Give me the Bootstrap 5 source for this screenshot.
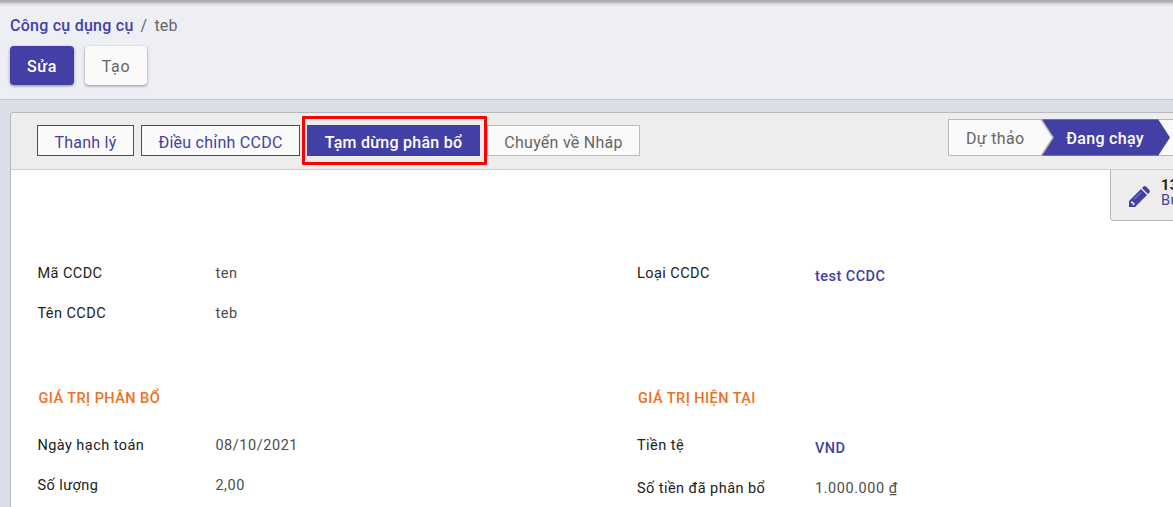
<!DOCTYPE html>
<html lang="vi">
<head>
<meta charset="utf-8">
<meta name="viewport" content="width=device-width, initial-scale=1">
<title>Công cụ dụng cụ</title>
<link href="https://cdn.jsdelivr.net/npm/bootstrap@5.3.0/dist/css/bootstrap.min.css" rel="stylesheet">
<style>
:root{--brand:#4340a5}
body{font-family:Roboto,"Noto Sans",sans-serif;font-size:16px;line-height:20px;background:#dbdde9;height:507px;overflow:hidden;color:#666}
.panel{height:100px;background:#eeeff4;border-bottom:1px solid #c4c5cf;padding:15px 10px 0}
.topline{height:7px;margin:-15px -10px 9px;background:linear-gradient(#a7a8ad,#b5b6bb 30%,#dedfe4 60%,#eeeff4)}
.crumbs{height:20px;letter-spacing:.25px;gap:7px}
.crumbs span{letter-spacing:.2px}
.crumbs a,.linkval{color:var(--brand);font-weight:500;text-decoration:none}
.act{height:39px;padding:3px 0 0;font-size:16px;border:0;border-radius:4px;box-shadow:0 1px 3px rgba(0,0,0,.42);letter-spacing:.6px;margin-top:10px}
.act-main,.act-main:hover{background:var(--brand);color:#fff;font-weight:500;width:64px}
.act-new{background:#fafafa;color:#666;width:62px;margin-left:11px}
.sheet{margin:12px 0 0 10px;height:395px;border:1px solid #b8b9bd;border-width:1px 0 0 1px;border-radius:4px 0 0 0;background:#fff;overflow:hidden}
.bar{height:57px;background:#ededed;border-bottom:1px solid #cfcfd3;padding:12px 0 0 26px}
.op{height:31px;padding:4px 0 0;border:1px solid var(--brand);border-radius:0;background:#fafafa;color:var(--brand);font-size:16px;line-height:20px;letter-spacing:.25px}
.op-a{width:97px}.op-b{width:159px;margin-left:7px}
.op-c{width:173px;margin-left:7px;background:var(--brand);color:#fff;font-weight:500;position:relative}
.op-c::after{content:"";position:absolute;left:-6px;top:-10px;width:185px;height:49px;border:3px solid #fe0000;border-radius:1px}
.op-d{width:153px;margin-left:7px;border-color:#bcbcbc;color:#666}
.steps{width:225px;height:37px;margin-top:-6px;border:1px solid #b9b9b9;border-right:0;background:#fafafa;padding:2px 0 0 17px;letter-spacing:.3px}
.steps svg{position:absolute;left:91px;top:-1px}
.steps b{position:relative;font-weight:500;color:#fff;margin-left:42px}
.stat{width:63px;height:51px;background:#ededed;border:1px solid #b8b9bd;border-width:0 0 1px 1px;border-radius:0 0 0 4px;padding:8px 0 0 17px}
.stat svg{margin:8px -1px 0 1px}
.stat-text{font-size:14.5px;line-height:15px;white-space:nowrap;letter-spacing:.4px;margin-left:12px}
.stat-text strong{color:#222}.stat-text span{color:var(--brand)}
.fields{padding:43px 0 0 26.4px;font-size:14.5px;letter-spacing:.45px;line-height:20px}
.group{width:599.6px;flex:none}
.line{height:40px}
.lbl{width:178px;color:#212121;flex:none}
.val{color:#4c4c4c;font-weight:400;letter-spacing:.55px}
.linkval{padding-top:3px}
.head{color:#f07023;font-weight:500;font-size:14.5px;letter-spacing:.45px;height:47px;padding-left:1px;margin:45px 0 0;line-height:20px}
.head-right{margin-top:85px}
.line-tall{height:43px}
</style>
</head>
<body>
<header class="panel">
  <div class="topline"></div>
  <div class="crumbs d-flex"><a href="#">Công cụ dụng cụ</a><span>/</span><span>teb</span></div>
  <div class="d-flex"><button class="btn act act-main">Sửa</button><button class="btn act act-new">Tạo</button></div>
</header>
<main class="sheet">
  <div class="bar d-flex justify-content-between">
    <div class="d-flex">
      <button class="btn op op-a">Thanh lý</button>
      <button class="btn op op-b">Điều chỉnh CCDC</button>
      <button class="btn op op-c">Tạm dừng phân bổ</button>
      <button class="btn op op-d">Chuyển về Nháp</button>
    </div>
    <div class="steps position-relative d-flex align-items-center">
      <svg width="134" height="37" viewBox="0 0 134 37"><path d="M1 0H118L130 18.5L118 37H1L13 18.5Z" fill="#4340a5"/><path d="M1 .5H118M1 36.5H118" stroke="#777"/><path d="M1 0L13 18.5L1 37" fill="none" stroke="#b9b9b0" stroke-width="1.5"/></svg>
      <span>Dự thảo</span><b>Đang chạy</b>
    </div>
  </div>
  <div class="d-flex justify-content-end">
    <div class="stat d-flex">
      <svg class="flex-shrink-0" width="21" height="21" viewBox="0 0 21 21"><path d="M0 21V15L12 3L18 9L6 21ZM13 2L14.5.6Q15.8-.5 17 .6L20.3 4Q21.4 5.2 20.4 6.4L19 8Z" fill="#4340a5"/><path d="M1.8 16.3V17.3H3.7V19.2H4.7L6 17.9L3.1 15Z" fill="#ededed"/><path d="M5.2 13.2L12.3 6.1" fill="none" stroke="#aaa8d3" stroke-width=".8"/></svg>
      <div class="stat-text d-flex flex-column"><strong>13</strong><span>Bút toán</span></div>
    </div>
  </div>
  <div class="fields d-flex">
    <section class="group">
      <div class="line d-flex"><div class="lbl">Mã CCDC</div><div class="val">ten</div></div>
      <div class="line d-flex"><div class="lbl">Tên CCDC</div><div class="val">teb</div></div>
      <h2 class="head">GIÁ TRỊ PHÂN BỔ</h2>
      <div class="line d-flex"><div class="lbl">Ngày hạch toán</div><div class="val">08/10/2021</div></div>
      <div class="line d-flex"><div class="lbl">Số lượng</div><div class="val">2,00</div></div>
    </section>
    <section class="group">
      <div class="line d-flex"><div class="lbl">Loại CCDC</div><a class="linkval" href="#">test CCDC</a></div>
      <h2 class="head head-right">GIÁ TRỊ HIỆN TẠI</h2>
      <div class="line line-tall d-flex"><div class="lbl">Tiền tệ</div><a class="linkval" href="#">VND</a></div>
      <div class="line d-flex"><div class="lbl">Số tiền đã phân bổ</div><div class="val">1.000.000 ₫</div></div>
    </section>
  </div>
</main>
<script src="https://cdn.jsdelivr.net/npm/bootstrap@5.3.0/dist/js/bootstrap.bundle.min.js"></script>
</body>
</html>
